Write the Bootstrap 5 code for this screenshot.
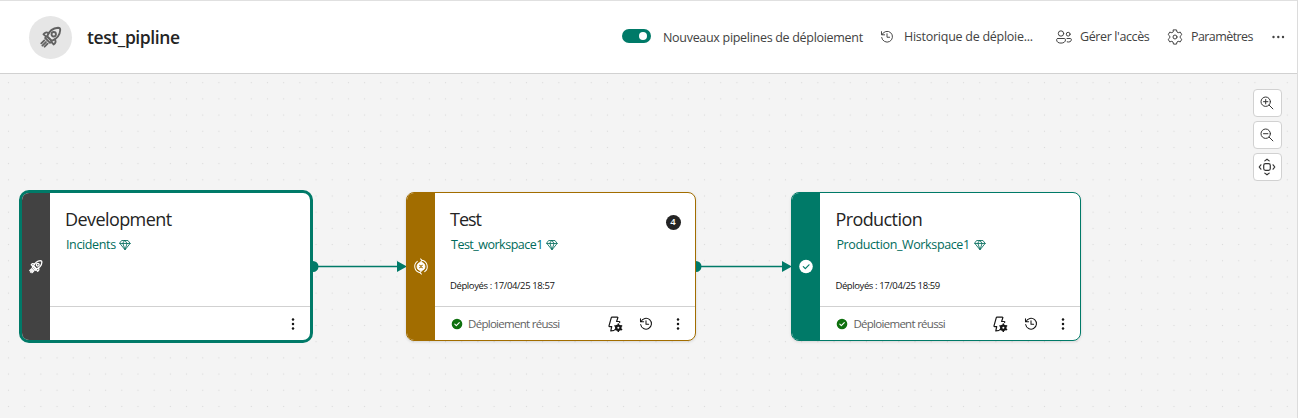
<!DOCTYPE html>
<html lang="fr">
<head>
<meta charset="utf-8">
<meta name="viewport" content="width=device-width, initial-scale=1">
<title>test_pipline</title>
<link href="https://cdn.jsdelivr.net/npm/bootstrap@5.3.0/dist/css/bootstrap.min.css" rel="stylesheet">
<style>
  :root { --teal: #007a68; --gold: #a26d00; --ink: #242424; }
  body { font-family: "Open Sans", "Noto Sans", sans-serif; color: var(--ink); height: 418px; overflow: hidden; background: #f4f4f4; border-right: 1px solid #dcdcdc; }
  svg { display: block; flex: none; fill: none; stroke: currentColor; stroke-linecap: round; stroke-linejoin: round; }
  .topbar { height: 74px; border-top: 1px solid #e0e0e0; border-bottom: 1px solid #d1d1d1; padding-left: 29px; }
  .avatar { width: 43px; height: 43px; background: #e6e6e6; color: #616161; }
  .pipe-name { font-size: 17.5px; font-weight: 600; margin-left: 15px; letter-spacing: -.4px; line-height: 24px; }
  .tools { font-size: 12.5px; color: #424242; line-height: 18px; padding-right: 12px; }
  .tool span { white-space: nowrap; }
  .toggle { width: 29px; height: 14px; background: var(--teal); padding-right: 4px; margin-top: -2px; }
  .toggle i { width: 8px; height: 8px; background: #fff; }
  .canvas { height: 344px; background-image: radial-gradient(circle, #dadada .5px, transparent 1px); background-size: 16.19px 16.19px; background-position: .4px .6px; }
  .flow { padding: 116px 0 0 19px; }
  .stage { width: 290px; height: 149px; background: #fff; border: 1px solid var(--tone); border-radius: 8px; overflow: hidden; box-shadow: 0 1px 3px rgba(0,0,0,.12); }
  .stage.selected { width: 294px; height: 153px; border: 3px solid var(--teal); border-radius: 10px; box-shadow: none; }
  .stripe { width: 28px; background: var(--tone); color: #fff; flex: none; }
  .stage-main { height: 114px; padding: 13px 15px 0 15px; border-bottom: 1px solid #d1d1d1; }
  .stage-title { font-size: 18px; line-height: 26px; letter-spacing: -.58px; }
  .t2 { letter-spacing: -1px; }
  .workspace { font-size: 12.5px; line-height: 18px; color: #006b5b; margin-top: 4px; padding-left: 1px; letter-spacing: -.37px; }
  .w2 { letter-spacing: -.5px; }
  .deployed { font-size: 9.5px; line-height: 14px; margin-top: 25px; letter-spacing: -.4px; color: #111; }
  .stage-foot { height: 33px; font-size: 11.5px; color: #616161; padding: 0 13px 0 16px; }
  .done { letter-spacing: -.71px; margin-left: 5px; }
  .stage-foot .actions { color: #161616; }
  .counter { width: 15px; height: 15px; background: var(--ink); color: #fff; font-size: 9.5px; font-weight: 600; margin-top: 8.5px; margin-right: -.5px; }
  .zoom-tools { position: absolute; left: 1253px; top: 89px; }
  .zoom-tools button { width: 29px; height: 28px; background: #fff; border: 1px solid #d1d1d1; border-radius: 4px; color: #333; padding: 0 1px 0 0; }
</style>
</head>
<body>
<svg width="0" height="0" class="position-absolute">
  <symbol id="rocket" viewBox="0 0 20 20">
    <path d="M6.400 9.400C8.200 4.800 11.600 1.900 16.400 1.600c1.200 0 2 .8 2 2-.3 4.800-3.200 8.200-7.800 10z"/>
    <path d="M6.400 9.400l4.200 4.200M7.700 6.600C5.900 5.200 4.300 5.900 3.200 7.600l2.400 2.100M13.400 12.300c1.400 1.800.7 3.400-1 4.500l-2.100-2.400M5.600 9.700l-.9 1.200 4.400 4.400 1.200-.9M3.900 13.100L1.200 15.800M5.400 14.600l-3.200 3.200M6.900 16.100l-2.700 2.700"/>
    <circle cx="12.500" cy="7.500" r="2"/>
  </symbol>
  <symbol id="history" viewBox="0 0 16 16">
    <path d="M2.300 5.300A6.200 6.200 0 1 1 1.900 8.600M1.700 1.900v3.600h3.600M8 4.300v4h3"/>
  </symbol>
  <symbol id="gem" viewBox="0 0 14 14">
    <path d="M3.500 1.800h7L13 5.200 7 12.600 1 5.200zM1 5.200h12M4.600 5.200L7 12.600l2.400-7.400L7 1.800z"/>
  </symbol>
  <symbol id="okay" viewBox="0 0 12 12">
    <circle cx="6" cy="6" r="5.300" fill="#0e700e" stroke="none"/><path d="M3.800 6.200l1.500 1.500 3-3.100" stroke="#fff"/>
  </symbol>
  <symbol id="rules" viewBox="0 0 16 16">
    <path d="M7 14.500l-3.200.4.900-4.300H2.600c-.5 0-.7-.3-.6-.8L4.300 1.600c.1-.3.300-.5.700-.5h5.300c.5 0 .7.300.5.800L9.600 5.500h2.600c.6 0 .8.500.4 1"/>
    <circle cx="11.300" cy="11.800" r="2.300" stroke-width="2"/><path d="M11.300 8v7.600M8 9.900l6.600 3.800M8 13.700l6.600-3.800" stroke-width="1.500"/><circle cx="11.300" cy="11.800" r="1" fill="#fff" stroke="none"/>
  </symbol>
  <symbol id="dots-v" viewBox="0 0 4 14">
    <g fill="currentColor" stroke="none"><circle cx="2" cy="2.500" r="1.250"/><circle cx="2" cy="7" r="1.250"/><circle cx="2" cy="11.500" r="1.250"/></g>
  </symbol>
</svg>

<header class="topbar bg-white d-flex align-items-center">
  <div class="avatar rounded-circle d-flex align-items-center justify-content-center"><svg width="22" height="22" stroke-width="1.700"><use href="#rocket"/></svg></div>
  <h1 class="pipe-name mb-0">test_pipline</h1>
  <nav class="tools d-flex align-items-center ms-auto">
    <div class="tool d-flex align-items-center" style="width:258px">
      <div class="toggle rounded-pill d-flex align-items-center justify-content-end"><i class="rounded-circle"></i></div>
      <span style="margin:1px 0 0 12px;letter-spacing:-.3px">Nouveaux pipelines de déploiement</span>
    </div>
    <div class="tool d-flex align-items-center" style="width:176px">
      <svg width="14" height="14" stroke-width="1.100"><use href="#history"/></svg>
      <span style="margin-left:10px;letter-spacing:-.26px">Historique de déploie...</span>
    </div>
    <div class="tool d-flex align-items-center" style="width:111px">
      <svg width="16" height="14" viewBox="0 0 16 14" stroke-width="1"><circle cx="5" cy="3.500" r="2.700"/><circle cx="12.200" cy="4.200" r="1.900"/><path d="M1.900 8.500h6.300c.8 0 1.300.5 1.300 1.200 0 2.200-1.800 3.400-4.500 3.400S.6 11.900.6 9.700c0-.7.5-1.200 1.300-1.200zM11 8.500h3.200c.8 0 1.200.5 1.200 1.100 0 1.900-1.900 2.900-4.200 2.300"/></svg>
      <span style="margin-left:8px;letter-spacing:-.38px">Gérer l'accès</span>
    </div>
    <div class="tool d-flex align-items-center" style="width:105px">
      <svg width="16" height="16" viewBox="0 0 16 16" stroke-width="1"><path d="M6.500.9h3l.5 2.100 1.200.7 2.100-.6 1.500 2.600L13.200 7.200v1.600l1.600 1.500-1.500 2.600-2.100-.6-1.200.7-.5 2.100h-3L6 13l-1.200-.7-2.100.6-1.500-2.600 1.600-1.500V7.200L1.200 5.700l1.500-2.600 2.100.6L6 3z"/><circle cx="8" cy="8" r="2"/></svg>
      <span style="margin-left:8px;letter-spacing:-.58px">Paramètres</span>
    </div>
    <svg width="13" height="4" viewBox="0 0 13 4"><g fill="#424242" stroke="none"><circle cx="1.500" cy="2" r="1.200"/><circle cx="6.300" cy="2" r="1.200"/><circle cx="11" cy="2" r="1.200"/></g></svg>
  </nav>
</header>

<main class="canvas">
  <div class="flow d-flex align-items-center">
    <section class="stage selected d-flex" style="--tone:#424242">
      <div class="stripe d-flex align-items-center justify-content-center"><svg width="14" height="15" stroke-width="1.900"><use href="#rocket"/></svg></div>
      <div class="flex-grow-1">
        <div class="stage-main">
          <div class="stage-title">Development</div>
          <div class="workspace d-flex align-items-center"><span>Incidents</span><svg style="margin-left:3px" width="12" height="12" stroke-width="1"><use href="#gem"/></svg></div>
        </div>
        <div class="stage-foot d-flex align-items-center justify-content-end"><svg class="actions" width="8" height="14"><use href="#dots-v"/></svg></div>
      </div>
    </section>

    <svg width="93" height="15" viewBox="0 0 93 15"><path d="M0 2a5.500 5.500 0 0 1 0 11zM84 2l10 5.500-10 5.500z" fill="#007a68" stroke="none"/><path d="M0 7.500h86" stroke="#007a68" stroke-width="1.700"/></svg>

    <section class="stage d-flex" style="--tone:#a26d00">
      <div class="stripe d-flex align-items-center justify-content-center"><svg width="16" height="17" viewBox="0 0 16 18" stroke-width="1.100"><circle cx="8" cy="9" r="4.100" fill="#fff"/><path d="M6.600 7.600l2.800 2.800M9.400 7.600l-2.800 2.800" stroke="#a26d00"/><path d="M9 2.400a6.700 6.700 0 0 1 2.900 12M7 15.600A6.700 6.700 0 0 1 4.100 3.600M7.500 1l1.700 1.500-1.500 1.500M8.500 17l-1.700-1.500 1.500-1.500"/></svg></div>
      <div class="flex-grow-1">
        <div class="stage-main">
          <div class="d-flex justify-content-between align-items-start" style="height:26px"><div class="stage-title t2">Test</div><div class="counter rounded-circle d-flex align-items-center justify-content-center">4</div></div>
          <div class="workspace d-flex align-items-center"><span class="w2">Test_workspace1</span><svg style="margin-left:3px" width="12" height="12" stroke-width="1"><use href="#gem"/></svg></div>
          <div class="deployed">Déployés : 17/04/25 18:57</div>
        </div>
        <div class="stage-foot d-flex align-items-center">
          <svg width="12" height="12" stroke-width="1.100"><use href="#okay"/></svg><span class="done">Déploiement réussi</span>
          <div class="actions d-flex align-items-center ms-auto"><svg width="16" height="16" stroke-width="1.200"><use href="#rules"/></svg><svg style="margin:0 21px 0 16px" width="14" height="14" stroke-width="1.200"><use href="#history"/></svg><svg width="8" height="14"><use href="#dots-v"/></svg></div>
        </div>
      </div>
    </section>

    <svg width="95.400" height="15" viewBox="0 0 95.400 15"><path d="M0 2a5.500 5.500 0 0 1 0 11zM86 2l10 5.500-10 5.500z" fill="#007a68" stroke="none"/><path d="M0 7.500h88" stroke="#007a68" stroke-width="1.700"/></svg>

    <section class="stage d-flex" style="--tone:#007a68">
      <div class="stripe d-flex align-items-center justify-content-center"><svg width="14" height="15" viewBox="0 0 14 14" stroke-width="1.200"><circle cx="7" cy="7" r="6.800" fill="#fff" stroke="none"/><path d="M4.300 7.200l2 2 3.700-3.900" stroke="#007a68"/></svg></div>
      <div class="flex-grow-1">
        <div class="stage-main">
          <div class="stage-title">Production</div>
          <div class="workspace d-flex align-items-center"><span>Production_Workspace1</span><svg class="ms-1" width="12" height="12" stroke-width="1"><use href="#gem"/></svg></div>
          <div class="deployed">Déployés : 17/04/25 18:59</div>
        </div>
        <div class="stage-foot d-flex align-items-center">
          <svg width="12" height="12" stroke-width="1.100"><use href="#okay"/></svg><span class="done">Déploiement réussi</span>
          <div class="actions d-flex align-items-center ms-auto"><svg width="16" height="16" stroke-width="1.200"><use href="#rules"/></svg><svg style="margin:0 21px 0 16px" width="14" height="14" stroke-width="1.200"><use href="#history"/></svg><svg width="8" height="14"><use href="#dots-v"/></svg></div>
        </div>
      </div>
    </section>
  </div>
</main>

<div class="zoom-tools d-flex flex-column gap-1">
  <button class="d-flex align-items-center justify-content-center" aria-label="Zoom avant"><svg width="14" height="14" viewBox="0 0 14 14" stroke-width="1"><circle cx="5.700" cy="5.700" r="4.700"/><path d="M5.700 3.500v4.400M3.500 5.700h4.400M9.200 9.200l3.700 3.700"/></svg></button>
  <button class="d-flex align-items-center justify-content-center" aria-label="Zoom arrière"><svg width="14" height="14" viewBox="0 0 14 14" stroke-width="1"><circle cx="5.700" cy="5.700" r="4.700"/><path d="M3.500 5.700h4.400M9.200 9.200l3.700 3.700"/></svg></button>
  <button class="d-flex align-items-center justify-content-center" aria-label="Ajuster"><svg width="18" height="18" viewBox="0 0 18 18" stroke-width="1.200"><rect x="5.700" y="5.700" width="6.600" height="6.600" rx="1.800"/><path d="M6.800 2.900L9 1.200l2.200 1.700M6.800 15.100L9 16.800l2.200-1.700M2.900 6.800L1.200 9l1.700 2.200M15.100 6.800L16.800 9l-1.700 2.200"/></svg></button>
</div>
<script src="https://cdn.jsdelivr.net/npm/bootstrap@5.3.0/dist/js/bootstrap.bundle.min.js"></script>
</body>
</html>
